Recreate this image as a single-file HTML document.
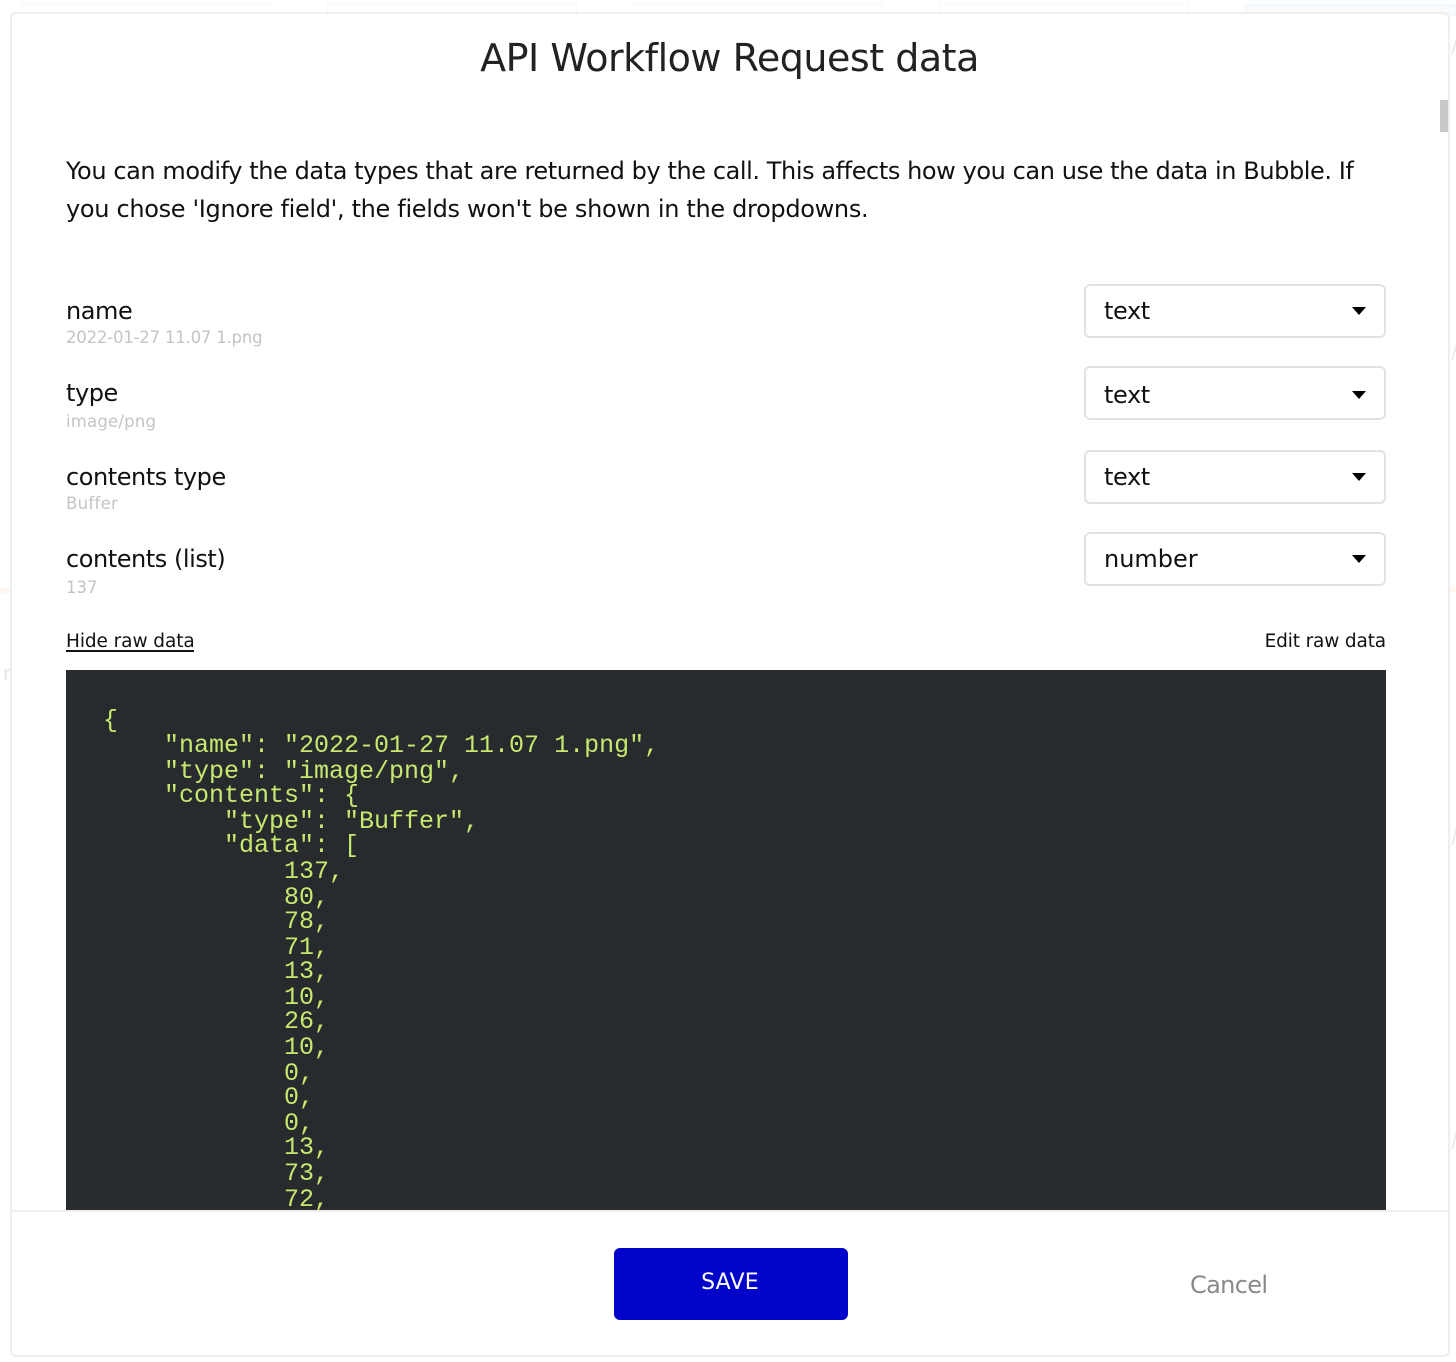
<!DOCTYPE html>
<html><head><meta charset="utf-8">
<style>
html,body{margin:0;padding:0;background:#fff;width:1456px;height:1362px;overflow:hidden}
body{position:relative;font-family:"DejaVu Sans","Liberation Sans",sans-serif;color:#111}
.a{position:absolute;white-space:pre;line-height:1}
.bgc{position:absolute;top:4px;height:12px;width:250px;border:1px solid #f6f6f6;box-sizing:border-box}
.modal{position:absolute;left:10px;top:12px;width:1440px;height:1345px;border:2px solid #eee;border-radius:6px;box-sizing:border-box;background:#fff}
.sel{position:absolute;left:1084px;width:302px;height:54px;box-sizing:border-box;border:2px solid #e2e2e2;border-radius:6px;background:#fff}
.tri{position:absolute;left:1352px;width:0;height:0;border-left:7px solid transparent;border-right:7px solid transparent;border-top:8px solid #000}
.lab{font-size:24px;left:66px;color:#111;letter-spacing:-.45px}
.sub{font-size:16.5px;left:66px;color:#c4c4c4}
.opt{font-size:24px;left:1104px;color:#111}
.code{position:absolute;left:66px;top:670px;width:1320px;height:540px;background:#282b2e;overflow:hidden}
.m{position:absolute;font-family:"Liberation Mono",monospace;font-size:25px;line-height:25px;color:#c6e86f;white-space:pre}
.sl{position:absolute;left:1451px;width:5px;height:20px;color:#e9e9e9;font-size:20px;line-height:20px;overflow:hidden}
</style></head>
<body>
<div class="bgc" style="left:21px"></div>
<div class="bgc" style="left:327px"></div>
<div class="bgc" style="left:633px;border-color:#f4f9ee"></div>
<div class="bgc" style="left:939px;border-color:#f4f9ee"></div>
<div class="bgc" style="left:1245px;width:211px;background:#f8fbfe;border-color:#f3f8fd"></div>
<div style="position:absolute;left:0;top:588px;width:10px;height:5px;background:#fff8ee"></div>
<div style="position:absolute;left:1450px;top:587px;width:6px;height:5px;background:#fff8ee"></div>
<div class="a" style="left:3px;top:663px;font-size:20px;color:#e6e6e6">r</div>
<div class="sl" style="top:36px">/</div>
<div class="sl" style="top:342px">/</div>
<div class="sl" style="top:826px">/</div>
<div class="sl" style="top:1130px">/</div>
<div class="modal"></div>
<div style="position:absolute;left:1440px;top:100px;width:8px;height:32px;background:#c8c8c8"></div>

<div class="a" style="left:0;width:1459px;text-align:center;top:39px;font-size:38px;color:#222;letter-spacing:-.48px">API Workflow Request data</div>
<div class="a" style="left:66px;top:159px;font-size:24px;color:#111;letter-spacing:-.42px">You can modify the data types that are returned by the call. This affects how you can use the data in Bubble. If</div>
<div class="a" style="left:66px;top:197px;font-size:24px;color:#111;letter-spacing:-.32px">you chose 'Ignore field', the fields won't be shown in the dropdowns.</div>

<div class="a lab" style="top:299px">name</div>
<div class="a sub" style="top:330px;letter-spacing:-.2px">2022-01-27 11.07 1.png</div>
<div class="a lab" style="top:381px">type</div>
<div class="a sub" style="top:414px;letter-spacing:.2px">image/png</div>
<div class="a lab" style="top:465px">contents type</div>
<div class="a sub" style="top:496px;letter-spacing:.3px">Buffer</div>
<div class="a lab" style="top:547px">contents (list)</div>
<div class="a sub" style="top:580px">137</div>

<div class="sel" style="top:284px"></div><div class="a opt" style="top:299px;letter-spacing:-.4px">text</div><div class="tri" style="top:307px"></div>
<div class="sel" style="top:366px"></div><div class="a opt" style="top:383px;letter-spacing:-.4px">text</div><div class="tri" style="top:391px"></div>
<div class="sel" style="top:450px"></div><div class="a opt" style="top:465px;letter-spacing:-.4px">text</div><div class="tri" style="top:473px"></div>
<div class="sel" style="top:532px"></div><div class="a opt" style="top:547px">number</div><div class="tri" style="top:555px"></div>

<div class="a" style="left:66px;top:633px;font-size:18.5px;color:#111;letter-spacing:-.08px">Hide raw data</div>
<div style="position:absolute;left:66px;top:650px;width:128px;height:2px;background:#111"></div>
<div class="a" style="right:70px;top:633px;font-size:18.5px;color:#111;letter-spacing:-.15px">Edit raw data</div>

<div class="code">
<div class="m" style="left:37px;top:38px">{</div>
<div class="m" style="left:98px;top:63px">"name": "2022-01-27 11.07 1.png",</div>
<div class="m" style="left:98px;top:89px">"type": "image/png",</div>
<div class="m" style="left:98px;top:113px">"contents": {</div>
<div class="m" style="left:158px;top:139px">"type": "Buffer",</div>
<div class="m" style="left:158px;top:163px">"data": [</div>
<div class="m" style="left:218px;top:189px">137,</div>
<div class="m" style="left:218px;top:215px">80,</div>
<div class="m" style="left:218px;top:239px">78,</div>
<div class="m" style="left:218px;top:265px">71,</div>
<div class="m" style="left:218px;top:289px">13,</div>
<div class="m" style="left:218px;top:315px">10,</div>
<div class="m" style="left:218px;top:339px">26,</div>
<div class="m" style="left:218px;top:365px">10,</div>
<div class="m" style="left:218px;top:391px">0,</div>
<div class="m" style="left:218px;top:415px">0,</div>
<div class="m" style="left:218px;top:441px">0,</div>
<div class="m" style="left:218px;top:465px">13,</div>
<div class="m" style="left:218px;top:491px">73,</div>
<div class="m" style="left:218px;top:517px">72,</div>
</div>

<div style="position:absolute;left:12px;top:1210px;width:1436px;height:2px;background:#eee"></div>
<div style="position:absolute;left:614px;top:1248px;width:234px;height:72px;background:#0205c9;border-radius:6px"></div>
<div class="a" style="left:614px;width:232px;text-align:center;top:1272px;font-size:22px;color:#fff;letter-spacing:.2px">SAVE</div>
<div class="a" style="left:1190px;top:1273px;font-size:24px;color:#8a8a8a;letter-spacing:-.65px">Cancel</div>
</body></html>
